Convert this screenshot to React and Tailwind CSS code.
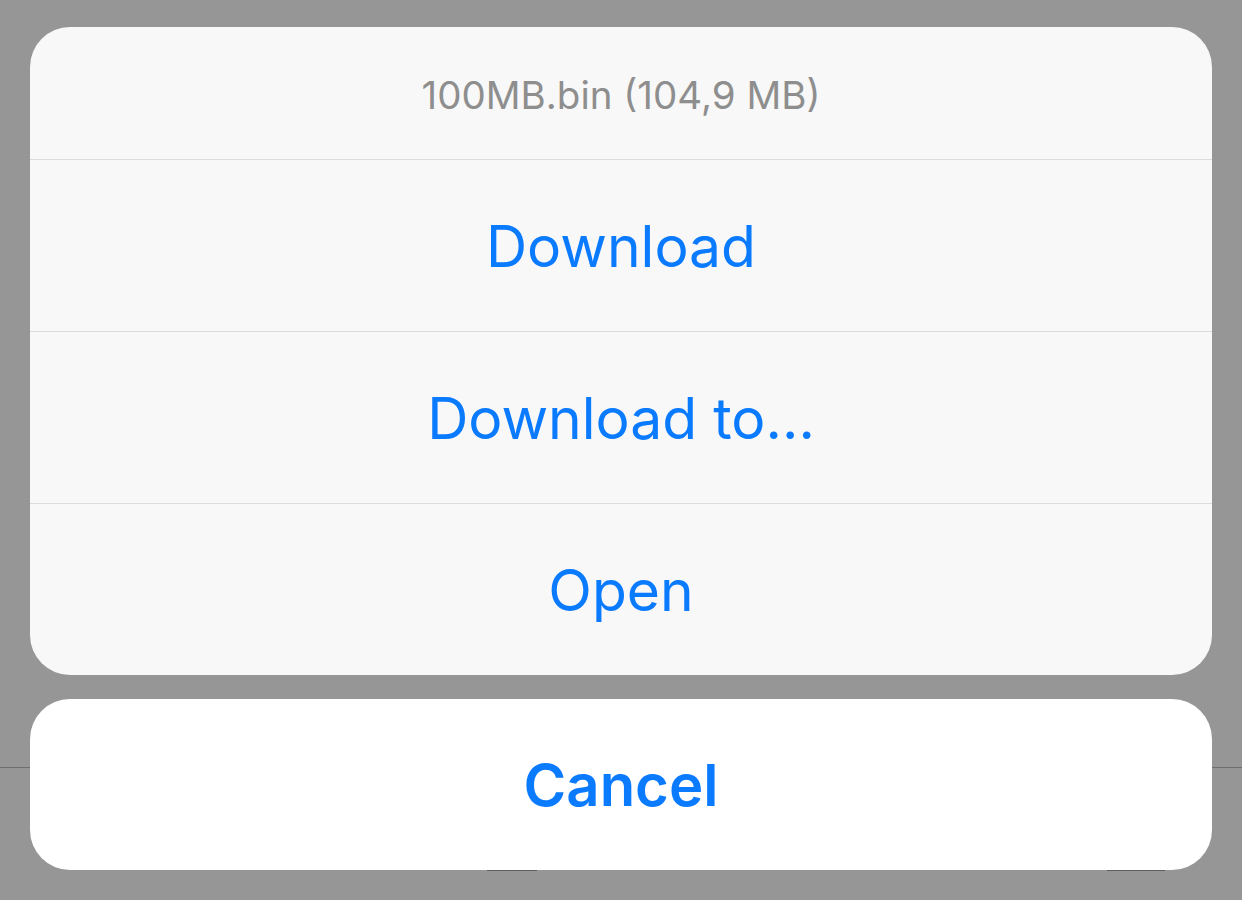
import React from 'react';

const ACTIONS = ['Download', 'Download to...', 'Open'];

export default function App() {
  return (
    <div
      className="relative h-[900px] w-full overflow-hidden bg-[#969696]"
      style={{ fontFamily: 'Inter, "Noto Sans", sans-serif' }}
    >
      {/* faint line of the page behind the sheet */}
      <div className="absolute left-0 right-0 top-[767px] h-px bg-[#6f6f6f]" />
      <div className="absolute left-[487px] top-[869px] h-[2px] w-[50px] bg-[#5e5e5e]" />
      <div className="absolute left-[1107px] top-[869px] h-[2px] w-[58px] bg-[#5e5e5e]" />

      <div className="relative flex flex-col gap-6 px-[30px] pt-[27px]">
        {/* Options group */}
        <div className="flex flex-col overflow-hidden rounded-[40px] bg-[#f8f8f8]">
          <div className="flex h-[133px] items-center justify-center border-b border-[#dcdcdc] pt-[5px] text-[38.5px] text-[#8e8e8e]">
            100MB.bin (104,9 MB)
          </div>
          {ACTIONS.map((label, i) => (
            <div
              key={label}
              className={`flex items-center justify-center pt-[3px] text-[57px] text-[#0a7aff] ${
                i < ACTIONS.length - 1 ? 'h-[172px] border-b border-[#dcdcdc]' : 'h-[171px]'
              }`}
            >
              {label}
            </div>
          ))}
        </div>

        {/* Cancel */}
        <div className="flex h-[171px] items-center justify-center rounded-[40px] bg-white pt-[2px] text-[58px] font-semibold text-[#0a7aff]">
          Cancel
        </div>
      </div>
    </div>
  );
}
